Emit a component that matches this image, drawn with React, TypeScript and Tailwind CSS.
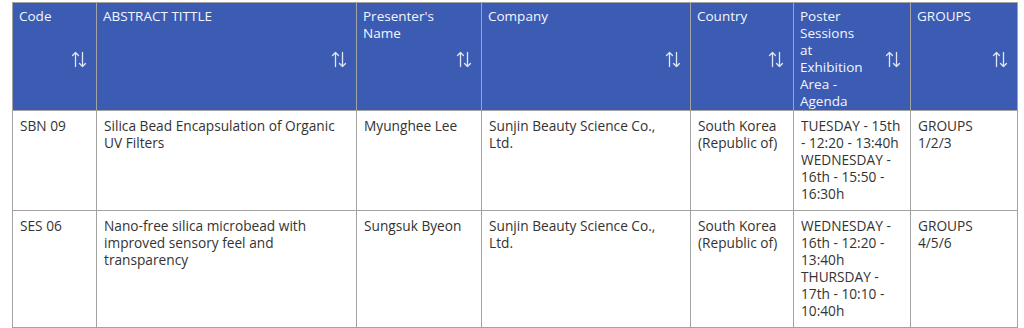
type Row = {
  code: string;
  title: string;
  presenter: string;
  company: string;
  country: string;
  sessions: string[];
  groups: string;
};

const columns = [
  "Code",
  "ABSTRACT TITTLE",
  "Presenter's Name",
  "Company",
  "Country",
  "Poster Sessions at Exhibition Area - Agenda",
  "GROUPS",
];

const rows: Row[] = [
  {
    code: "SBN 09",
    title: "Silica Bead Encapsulation of Organic UV Filters",
    presenter: "Myunghee Lee",
    company: "Sunjin Beauty Science Co., Ltd.",
    country: "South Korea (Republic of)",
    sessions: ["TUESDAY - 15th - 12:20 - 13:40h", "WEDNESDAY - 16th - 15:50 - 16:30h"],
    groups: "GROUPS 1/2/3",
  },
  {
    code: "SES 06",
    title: "Nano-free silica microbead with improved sensory feel and transparency",
    presenter: "Sungsuk Byeon",
    company: "Sunjin Beauty Science Co., Ltd.",
    country: "South Korea (Republic of)",
    sessions: ["WEDNESDAY - 16th - 12:20 - 13:40h", "THURSDAY - 17th - 10:10 - 10:40h"],
    groups: "GROUPS 4/5/6",
  },
];

function SortIcon() {
  return (
    <svg viewBox="0 0 16 17" className="h-[17px] w-[16px] shrink-0" fill="none" stroke="#dfe6f7" strokeWidth="1.3" strokeLinecap="round" strokeLinejoin="round">
      <path d="M4.5 1.5v14M1.5 4.5l3-3 3 3" />
      <path d="M11.5 1.5v14M8.5 12.5l3 3 3-3" />
    </svg>
  );
}

const cell = "bg-white pb-[8px] pl-[7px] pr-2 pt-[6px]";

export default function App() {
  return (
    <div className="min-h-[328px] bg-white pl-3 pt-[2px] font-['Open_Sans',sans-serif] leading-[17px]">
      <div className="grid w-[1006px] grid-cols-[83px_259px_124px_208px_102px_116px_106px] gap-px border border-[#a3a3a3] bg-[#a3a3a3]">
        {columns.map((col) => (
          <div key={col} className="flex items-start gap-[16px] bg-[#3b5cb2] pb-0 pl-[6px] pr-[9px] pt-[5px] text-[13.5px] text-[#f4f6ff]">
            <span className="min-w-0 flex-1">{col}</span>
            <span className="mt-[1px] self-center">
              <SortIcon />
            </span>
          </div>
        ))}
        {rows.map((row) => (
          <div key={row.code} className="contents text-[13.7px] text-[#333333]">
            <div className={cell}>{row.code}</div>
            <div className={cell}>{row.title}</div>
            <div className={cell}>{row.presenter}</div>
            <div className={cell}>{row.company}</div>
            <div className={cell}>{row.country}</div>
            <div className={cell}>
              {row.sessions.map((s) => (
                <div key={s}>{s}</div>
              ))}
            </div>
            <div className={cell}>{row.groups}</div>
          </div>
        ))}
      </div>
    </div>
  );
}
